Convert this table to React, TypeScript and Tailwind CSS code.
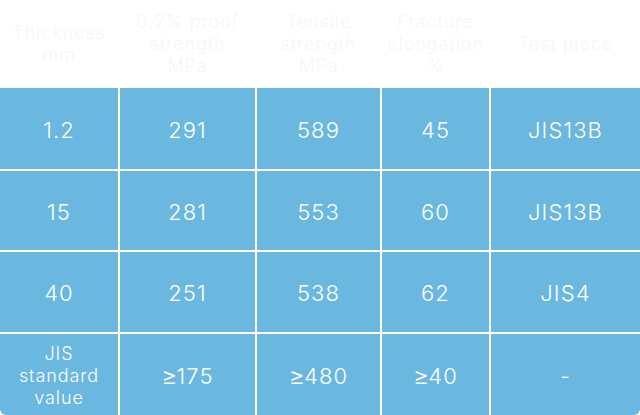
const headers = [
  ["Thickness", "mm"],
  ["0.2% proof", "strength", "MPa"],
  ["Tensile", "strength", "MPa"],
  ["Fracture", "elongation", "%"],
  ["Test piece"],
];

const rows = [
  ["1.2", "291", "589", "45", "JIS13B"],
  ["15", "281", "553", "60", "JIS13B"],
  ["40", "251", "538", "62", "JIS4"],
];

const lastRow = ["175", "480", "40", "-"];

export default function App() {
  return (
    <div
      className="w-[640px] h-[415px] bg-white grid grid-cols-[118px_135px_123px_107px_149px] grid-rows-[86px_81px_79px_80px_81px] gap-[2px] font-light"
      style={{ fontFamily: 'Inter, "Noto Sans", sans-serif' }}
    >
      {/* Header */}
      {headers.map((lines, i) => (
        <div
          key={i}
          className="flex flex-col items-center justify-center pt-[2px] text-[18px] leading-[22px] tracking-[0.05em] text-[#f2f7fb]"
        >
          {lines.map((l) => (
            <span key={l}>{l}</span>
          ))}
        </div>
      ))}

      {/* Body */}
      {rows.map((row, r) =>
        row.map((cell, c) => (
          <div
            key={`${r}-${c}`}
            className="bg-[#6ab7e0] flex items-center justify-center pt-[3px] text-white text-[22px] tracking-[0.05em]"
          >
            {cell}
          </div>
        ))
      )}

      {/* JIS standard value */}
      <div className="bg-[#6ab7e0] rounded-bl-[6px] flex flex-col items-center justify-center pt-[2px] text-white text-[18px] leading-[22px] tracking-[0.05em]">
        <span>JIS</span>
        <span>standard</span>
        <span>value</span>
      </div>
      {lastRow.map((cell, c) => (
        <div
          key={c}
          className={`bg-[#6ab7e0] flex items-center justify-center pt-[3px] text-white text-[22px] tracking-[0.05em] ${
            c === lastRow.length - 1 ? "rounded-br-[6px]" : ""
          }`}
        >
          {cell === "-" ? (
            cell
          ) : (
            <>
              <span className="text-[25px] leading-none tracking-normal mr-[-1px]">≥</span>
              {cell}
            </>
          )}
        </div>
      ))}
    </div>
  );
}
